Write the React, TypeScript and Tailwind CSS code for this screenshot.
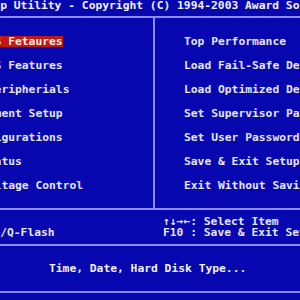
const leftItems = [
  "Standard CMOS Fetaures",
  "Advanced BIOS Features",
  "Integrated Peripherials",
  "Power Management Setup",
  "PnP/PCI Configurations",
  "PC Health Status",
  "Frequency/Voltage Control",
];

const rightItems = [
  "Top Performance",
  "Load Fail-Safe Defaults",
  "Load Optimized Defaults",
  "Set Supervisor Password",
  "Set User Password",
  "Save & Exit Setup",
  "Exit Without Saving",
];

function Rule() {
  return <div className="h-[2px] w-full bg-[#8c8cf0]" />;
}

export default function App() {
  return (
    <div
      className="h-[300px] w-[300px] overflow-hidden bg-[#0707b0] text-[11.3px] font-bold leading-[11px] text-[#e6e6f2] whitespace-pre"
      style={{ fontFamily: '"DejaVu Sans Mono", "Liberation Mono", monospace' }}
    >
      {/* Title */}
      <div className="flex h-[16px] items-start">
        <span className="-ml-[61px] shrink-0 text-[#f2f2fa]">
          CMOS Setup Utility - Copyright (C) 1994-2003 Award Software
        </span>
      </div>
      <Rule />

      {/* Main menu */}
      <div className="flex h-[190px]">
        <div className="flex w-[153px] shrink-0 flex-col pt-[18px]">
          {leftItems.map((item, i) => (
            <div key={item} className="flex h-[24px]">
              <span
                className={`-ml-[87px] h-[11px] shrink-0 ${
                  i === 0 ? "bg-[#c01818] text-[#fbf2e4]" : ""
                }`}
              >
                {item}
              </span>
            </div>
          ))}
        </div>
        <div className="w-[2px] shrink-0 bg-[#8c8cf0]" />
        <div className="flex shrink-0 flex-col pl-[29px] pt-[18px]">
          {rightItems.map((item) => (
            <div key={item} className="h-[24px]">
              {item}
            </div>
          ))}
        </div>
      </div>
      <Rule />

      {/* Key help */}
      <div className="flex h-[34px] pt-[6px]">
        <div className="flex w-[163px] shrink-0 flex-col">
          <span className="-ml-[68px] h-[11px]">Esc : Quit</span>
          <span className="-ml-[95px] h-[11px]">F8 : Dual BIOS/Q-Flash</span>
        </div>
        <div className="flex shrink-0 flex-col">
          <span className="h-[11px]">↑↓→←: Select Item</span>
          <span className="h-[11px]">F10 : Save &amp; Exit Setup</span>
        </div>
      </div>
      <Rule />

      {/* Description */}
      <div className="flex h-[45px] items-center pl-[49px]">
        <span className="text-[#f2f2fa]">Time, Date, Hard Disk Type...</span>
      </div>
      <Rule />
    </div>
  );
}
